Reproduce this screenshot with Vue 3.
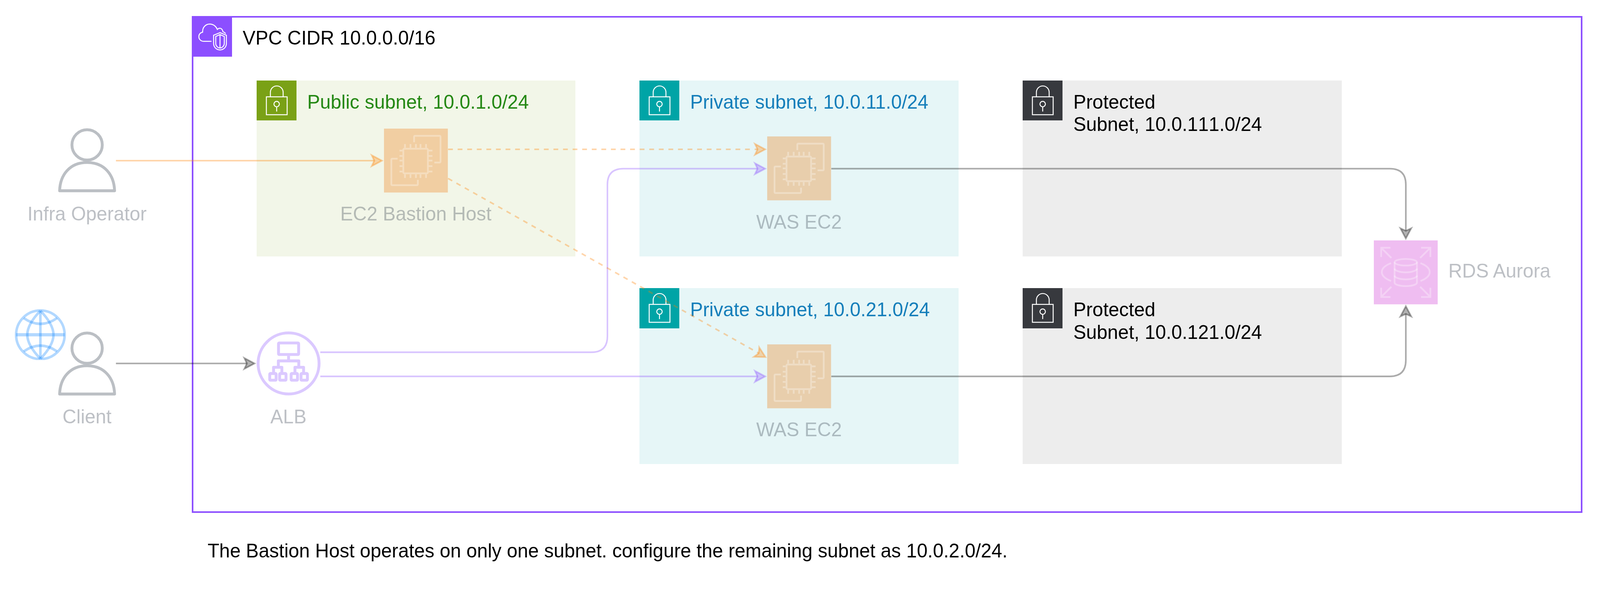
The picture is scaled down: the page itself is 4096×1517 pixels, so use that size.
<script setup>
const U = 4096 / 5010
const px = (v) => `${(v * U).toFixed(2)}px`
const place = (b) => ({
  left: px(b.x),
  top: px(b.y),
  width: px(b.w),
  ...(b.h ? { height: px(b.h) } : {})
})

const zones = [
  { id: 'pub', kind: 'public', x: 803, y: 252, w: 999, h: 550, title: 'Public subnet, 10.0.1.0/24' },
  { id: 'pri1', kind: 'private', x: 2002, y: 252, w: 1000, h: 550, title: 'Private subnet, 10.0.11.0/24' },
  { id: 'pro1', kind: 'protected', x: 3202, y: 252, w: 1000, h: 550, title: 'Protected\nSubnet, 10.0.111.0/24' },
  { id: 'pri2', kind: 'private', x: 2002, y: 902, w: 1000, h: 550, title: 'Private subnet, 10.0.21.0/24' },
  { id: 'pro2', kind: 'protected', x: 3202, y: 902, w: 1000, h: 550, title: 'Protected\nSubnet, 10.0.121.0/24' }
]

const ec2s = [
  { id: 'bastion', x: 1202, y: 402, w: 200, label: 'EC2 Bastion Host' },
  { id: 'was1', x: 2402, y: 427, w: 200, label: 'WAS EC2' },
  { id: 'was2', x: 2402, y: 1077, w: 200, label: 'WAS EC2' }
]

const people = [
  { id: 'op', x: 182, y: 403, w: 181, label: 'Infra Operator' },
  { id: 'cl', x: 182, y: 1038, w: 181, label: 'Client' }
]

const topPins = [65.7, 83, 100, 114.3, 131.7]
const sidePins = [68.7, 85.7, 100, 117.3, 134.3]
const albBoxes = [41, 72, 108, 139]

const wires = [
  { id: 'w1', tone: 'orange', d: 'M363 502.5H1172' },
  { id: 'w2', tone: 'gray', d: 'M363 1137H773' },
  { id: 'w3', tone: 'purple', d: 'M1003 1102H1852Q1902 1102 1902 1052V577Q1902 527.5 1952 527.5H2372' },
  { id: 'w4', tone: 'purple', d: 'M1003 1177.5H2372' },
  { id: 'w5', tone: 'orange', dash: true, d: 'M1403 467H2372' },
  { id: 'w6', tone: 'orange', dash: true, d: 'M1403 558L2376 1105' },
  { id: 'w7', tone: 'gray', d: 'M2603 527.5H4352Q4402 527.5 4402 577V722' },
  { id: 'w8', tone: 'gray', d: 'M2603 1177.5H4352Q4402 1177.5 4402 1127V982' }
]

const arrows = [
  { id: 'a1', tone: 'orange', x: 1202, y: 502.5, r: 0 },
  { id: 'a2', tone: 'gray', x: 803, y: 1137, r: 0 },
  { id: 'a3', tone: 'purple', x: 2402, y: 527.5, r: 0 },
  { id: 'a4', tone: 'purple', x: 2402, y: 1177.5, r: 0 },
  { id: 'a5', tone: 'orange', x: 2402, y: 467, r: 0 },
  { id: 'a6', tone: 'orange', x: 2402, y: 1120, r: 29.4 },
  { id: 'a7', tone: 'gray', x: 4402, y: 752, r: 90 },
  { id: 'a8', tone: 'gray', x: 4402, y: 952, r: -90 }
]
</script>

<template>
  <div class="canvas">
    <section class="zone vpc" :style="place({ x: 600, y: 50, w: 4355, h: 1555 })">
      <div class="badge badge-vpc">
        <svg viewBox="0 0 127 127" class="glyph">
          <path d="M61.7 79.3H38C28 79.3 22 72 22 65C22 57 27 52 34 50.5C33 36 43 25 56 25C67 25 76 32 80 42C84 37 92 36 96 44C97 46 97 47 97.5 49C101 50 104 52 106 55" />
          <path d="M88.3 52L108.3 60V86C108.3 98 99 106 88.3 106C77.6 106 68.3 98 68.3 86V60Z" />
          <path d="M88.3 58L101.7 64V86C101.7 94 95 100 88.3 100C81.6 100 75 94 75 86V64ZM88.3 58V100" />
        </svg>
      </div>
      <h2 class="zone-title">VPC CIDR 10.0.0.0/16</h2>
    </section>

    <section v-for="z in zones" :key="z.id" class="zone" :class="z.kind" :style="place(z)">
      <div class="badge">
        <svg viewBox="0 0 125 125" class="glyph">
          <rect x="30.5" y="51" width="65" height="56" />
          <path d="M43 51V37a20 20 0 0 1 40 0V51" />
          <circle cx="62.7" cy="73.7" r="8.5" />
          <path d="M62.7 82V97" />
        </svg>
      </div>
      <h3 class="zone-title">{{ z.title }}</h3>
    </section>

    <figure v-for="n in ec2s" :key="n.id" class="node" :style="place(n)">
      <svg viewBox="0 0 200 200" class="icon">
        <rect width="200" height="200" class="tile tile-ec2" />
        <g class="chip">
          <rect x="60.5" y="63" width="77" height="77" rx="3" />
          <path v-for="p in topPins" :key="'t' + p" :d="`M${p} 48.3V60M${p} 143V154.3`" />
          <path v-for="p in sidePins" :key="'s' + p" :d="`M48.7 ${p}H57.7M140 ${p}H151.7`" />
          <path d="M94.3 42.7V25.7q0-3 3-3H174q3 0 3 3V103q0 3-3 3H157.7" />
          <path d="M42.7 94.3H26q-3 0-3 3V174q0 3 3 3H103q3 0 3-3V160.3" />
        </g>
      </svg>
      <figcaption class="node-label">{{ n.label }}</figcaption>
    </figure>

    <figure v-for="n in people" :key="n.id" class="node" :style="place(n)">
      <svg viewBox="0 0 181 199" class="icon person">
        <circle cx="90.5" cy="51" r="47.5" />
        <path d="M4.5 194.5C6 145 36 106 90.5 106C145 106 175 145 176.5 194.5Z" />
      </svg>
      <figcaption class="node-label">{{ n.label }}</figcaption>
    </figure>

    <svg class="globe" viewBox="0 0 160 160" :style="place({ x: 47, y: 967, w: 160, h: 160 })">
      <circle cx="80" cy="80" r="76" />
      <path d="M80 8V152" />
      <path d="M4 80H156" class="equator" />
      <path d="M80 5C52 34 39 58 39 80S52 126 80 155" />
      <path d="M80 5C108 34 121 58 121 80S108 126 80 155" />
      <path d="M28 28Q80 64 132 28" />
      <path d="M28 132Q80 96 132 132" />
    </svg>

    <figure class="node" :style="place({ x: 803, y: 1037, w: 200 })">
      <svg viewBox="0 0 200 200" class="icon alb">
        <circle cx="100" cy="100" r="95.5" />
        <rect x="68.5" y="36" width="63" height="36" rx="2" />
        <path d="M100 76V92M68 112V92H132V112" />
        <path d="M53 131V112H79V131M120 131V112H147V131" />
        <rect v-for="b in albBoxes" :key="b" :x="b" y="131.5" width="20" height="21" rx="2" />
      </svg>
      <figcaption class="node-label">ALB</figcaption>
    </figure>

    <figure class="node node-row" :style="place({ x: 4302, y: 752, w: 620 })">
      <svg viewBox="0 0 200 200" class="icon rds-icon">
        <rect width="200" height="200" class="tile tile-rds" />
        <g class="chip">
          <path d="M23 52V23H52M23 23L55 55M177 52V23H148M177 23L145 55" />
          <path d="M23 148V177H52M23 177L55 145M177 148V177H148M177 177L145 145" />
          <ellipse cx="100" cy="68.3" rx="35" ry="10.3" />
          <path d="M65 68V132C65 138 80 143 100 143S135 138 135 132V68" />
          <path d="M65 88C65 94 80 100 100 100S135 94 135 88" />
          <path d="M65 110C65 116 80 122 100 122S135 116 135 110" />
          <path d="M54 71C36 78 25 87 25 99S36 120 54 127" />
          <path d="M146 71C164 78 175 87 175 99S164 120 146 127" />
        </g>
      </svg>
      <figcaption class="node-label rds-label">RDS Aurora</figcaption>
    </figure>

    <svg class="wires" viewBox="0 0 5010 1855">
      <path v-for="w in wires" :key="w.id" :d="w.d" class="wire" :class="[w.tone, { dashed: w.dash }]" />
      <path
        v-for="a in arrows"
        :key="a.id"
        d="M-6 0L-38 -17L-30 0L-38 17Z"
        class="head"
        :class="a.tone"
        :transform="`translate(${a.x} ${a.y}) rotate(${a.r})`"
      />
    </svg>

    <p class="note" :style="place({ x: 650, y: 1689, w: 2700 })">
      The Bastion Host operates on only one subnet. configure the remaining subnet as 10.0.2.0/24.
    </p>
  </div>
</template>

<style>
html, body { margin: 0; background: #fff; }
</style>

<style scoped>
.canvas {
  --u: 0.81756px;
  position: relative;
  width: 4096px;
  height: 1517px;
  overflow: hidden;
  background: #fff;
  font-family: "Liberation Sans", Arial, sans-serif;
  font-size: calc(60 * var(--u));
  line-height: calc(70 * var(--u));
}
.zone {
  position: absolute;
  box-sizing: border-box;
  display: flex;
  align-items: flex-start;
}
.public { background: #f2f6e8; color: #248814; }
.private { background: #e6f6f7; color: #147eba; }
.protected { background: #ededed; color: #000; font-kerning: none; }
.vpc {
  box-shadow: inset 0 0 0 calc(5 * var(--u)) #8c4fff;
  color: #000;
}
.badge {
  flex: none;
  width: calc(125 * var(--u));
  height: calc(125 * var(--u));
}
.public .badge { background: #7aa116; }
.private .badge { background: #00a4a6; }
.protected .badge { background: #37393e; }
.badge-vpc {
  width: calc(127 * var(--u));
  height: calc(127 * var(--u));
  background: #8c4fff;
}
.glyph {
  display: block;
  width: 100%;
  height: 100%;
  fill: none;
  stroke: #fff;
  stroke-width: 3;
}
.zone-title {
  margin: calc(33 * var(--u)) 0 0 calc(34 * var(--u));
  font-size: inherit;
  font-weight: 400;
  white-space: pre-line;
}
.vpc .zone-title {
  margin: calc(34 * var(--u)) 0 0 calc(33 * var(--u));
}
.node {
  position: absolute;
  margin: 0;
  display: flex;
  flex-direction: column;
  align-items: center;
  gap: calc(33 * var(--u));
}
.node-row {
  flex-direction: row;
  align-items: center;
  gap: calc(33 * var(--u));
}
.icon {
  display: block;
  flex: none;
  width: 100%;
  overflow: visible;
}
.rds-icon {
  width: calc(200 * var(--u));
}
.node-label {
  color: rgba(35, 47, 62, 0.3);
  white-space: nowrap;
}
.rds-label {
  margin-bottom: calc(6 * var(--u));
}
.tile { opacity: 0.3; }
.tile-ec2 { fill: #ed7100; }
.tile-rds { fill: #c925d1; }
.chip {
  fill: none;
  stroke: #fff;
  stroke-opacity: 0.3;
  stroke-width: 5.5;
}
.person {
  opacity: 0.3;
  fill: none;
  stroke: #232f3e;
  stroke-width: 9;
  stroke-linejoin: round;
}
.alb {
  opacity: 0.3;
  fill: none;
  stroke: #8c4fff;
  stroke-width: 9;
  stroke-linejoin: round;
}
.globe {
  position: absolute;
  fill: none;
  stroke: #007fff;
  stroke-opacity: 0.3;
  stroke-width: 8;
}
.globe .equator { stroke-width: 10; }
.wires {
  position: absolute;
  left: 0;
  top: 0;
  width: 100%;
  height: 100%;
  pointer-events: none;
}
.wire {
  fill: none;
  stroke-width: 5;
  stroke-opacity: 0.33;
}
.dashed { stroke-dasharray: 15 15; }
.head {
  stroke-width: 5;
  stroke-opacity: 0.33;
  fill-opacity: 0.3;
  stroke-miterlimit: 10;
}
.wire.orange { stroke: #ff8000; }
.wire.gray { stroke: #000; }
.wire.purple { stroke: #8c4fff; }
.head.orange { stroke: #ff8000; fill: #ff8000; }
.head.gray { stroke: #000; fill: #000; }
.head.purple { stroke: #8c4fff; fill: #8c4fff; }
.note {
  position: absolute;
  margin: 0;
  color: #000;
  white-space: nowrap;
}
</style>
